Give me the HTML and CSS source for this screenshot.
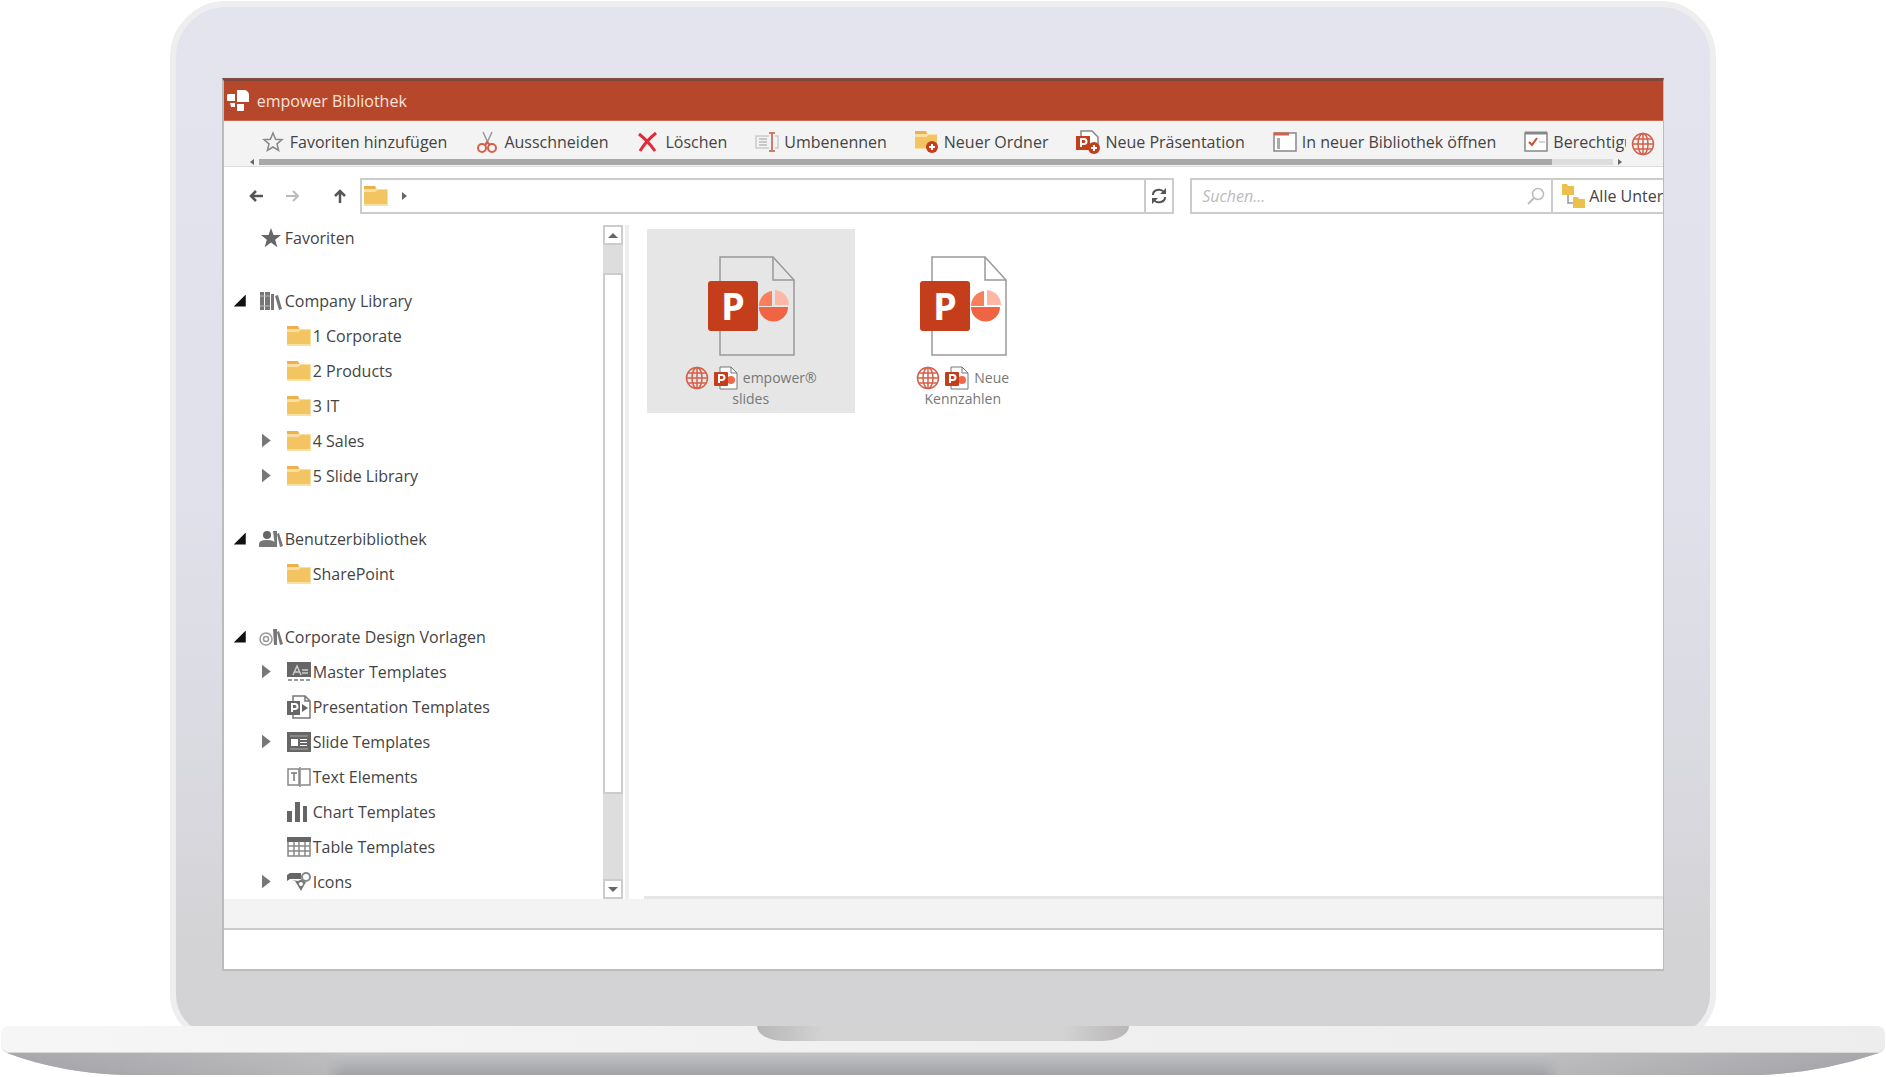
FILE: index.html
```
<!DOCTYPE html>
<html lang="de">
<head>
    <meta charset="UTF-8">
    <meta name="viewport" content="width=device-width, initial-scale=1.0">
    <title>empower Bibliothek</title>
    <link rel="stylesheet" href="styles.css">
</head>
<body>

<!-- shared icons -->
<svg class="sprite" aria-hidden="true">
    <symbol id="folder" viewBox="0 0 24 20">
        <path d="M0 0h11l2 3h11v17H0z" fill="#fbdfa0"/>
        <path d="M0 0h11l1 3H0z" fill="#eeb04c"/>
        <path d="M0 6h11l3-2h9v14H0z" fill="#f2c462"/>
    </symbol>
    <symbol id="globe" viewBox="0 0 24 24">
        <g fill="none" stroke="#d4604a" stroke-width="1.5">
            <circle cx="12" cy="12" r="10.5"/>
            <ellipse cx="12" cy="12" rx="5" ry="10.5"/>
            <path d="M12 1v22M1 12h22M3 7h18M3 17h18"/>
        </g>
    </symbol>
    <symbol id="ppt" viewBox="0 0 24 24">
        <path d="M6 1h11l6 6v16H6z" fill="#fff" stroke="#777"/>
        <path d="M17 1v6h6" fill="none" stroke="#777"/>
        <circle cx="17" cy="14" r="4" fill="#f0694a"/>
        <rect x="0" y="6" width="14" height="14" rx="1" fill="#c43e1c"/>
        <path d="M5 17V9h3a2.5 2.5 0 0 1 0 5H5" fill="none" stroke="#fff" stroke-width="2"/>
    </symbol>
    <symbol id="file" viewBox="0 0 90 100">
        <path d="M14 1h53l21 23v75H14z" fill="none" stroke="#999" stroke-width="1.5"/>
        <path d="M67 1v23h21" fill="none" stroke="#999" stroke-width="1.5"/>
        <path d="M66 50V35a15 15 0 0 0-13 15z" fill="#f97e5c"/>
        <path d="M53 51h29a14.500 14.500 0 0 1-29 0z" fill="#f06443"/>
        <path d="M69 34a15 15 0 0 1 14 15H69z" fill="#fcb8a4"/>
        <rect x="2" y="25" width="50" height="50" rx="3" fill="#c43e1c"/>
    </symbol>
    <symbol id="books" viewBox="0 0 24 20">
        <path d="M1 1h4v18H1zM6 1h5v18H6zM12 3h3v16h-3zM16 5l3-1 4 14-3 1z" fill="#777"/>
        <path d="M1 5h10M1 15h10" stroke="#bbb"/>
    </symbol>
    <symbol id="user-books" viewBox="0 0 24 20">
        <circle cx="8" cy="6" r="4" fill="#666"/>
        <path d="M0 18v-3q0-4 8-4t8 4v3zM14 2h4v16h-2zM18 5l2-1 4 13-3 1z" fill="#777"/>
    </symbol>
    <symbol id="design-books" viewBox="0 0 24 20">
        <circle cx="7" cy="12" r="6" fill="none" stroke="#999" stroke-width="1.5"/>
        <circle cx="7" cy="12" r="2.5" fill="none" stroke="#999" stroke-width="1.5"/>
        <path d="M14 2h4v16h-3zM18 5l2-1 4 13-3 1z" fill="#777"/>
    </symbol>
    <symbol id="master" viewBox="0 0 24 20">
        <path d="M0 0h24v15H0z" fill="#666"/>
        <path d="M6 13l4-9 4 9M8 10h5M15 11h6M15 8h6" fill="none" stroke="#ccc" stroke-width="1.5"/>
        <path d="M1 18h22" stroke="#999" stroke-width="2" stroke-dasharray="4 2"/>
    </symbol>
    <symbol id="presentation" viewBox="0 0 24 24">
        <path d="M6 6V1h12l5 5v17H6v-4M18 1v5h5" fill="none" stroke="#777" stroke-width="1.5"/>
        <path d="M0 6h13v14H0zM15 9l6 4-6 4z" fill="#666"/>
        <path d="M5 17V9h3a2.5 2.5 0 0 1 0 5H5" fill="none" stroke="#fff" stroke-width="2"/>
    </symbol>
    <symbol id="slide" viewBox="0 0 24 20">
        <path d="M0 0h24v20H0z" fill="#666"/>
        <path d="M3 4h18M3 17h18" stroke="#aaa"/>
        <path d="M4 7h7v7H4zM13 7h7v1h-7zM13 10h7v1h-7zM13 13h7v1h-7z" fill="#fff"/>
    </symbol>
    <symbol id="textbox" viewBox="0 0 24 20">
        <path d="M1 2h11v16H1zM14 2h9v16h-9M13 0v20" fill="none" stroke="#888" stroke-width="1.5"/>
        <path d="M4 6h6M7 6v8" stroke="#777" stroke-width="1.5"/>
    </symbol>
    <symbol id="chart" viewBox="0 0 24 20">
        <path d="M0 9h5v11H0zM8 0h5v20H8zM16 4h4v16h-4z" fill="#666"/>
    </symbol>
    <symbol id="table" viewBox="0 0 24 20">
        <path d="M1 1h22v18H1zM1 9h22M1 14h22M7 5v14M12 5v14M18 5v14" fill="#fff" stroke="#888" stroke-width="1.5"/>
        <path d="M0 0h24v5H0z" fill="#666"/>
    </symbol>
    <symbol id="shapes" viewBox="0 0 24 20">
        <path d="M0 3l3-2h11v6H3L0 9z" fill="#666"/>
        <path d="M5 8l3 1 6 10 5-9-4-3-4 2z" fill="#777"/>
        <circle cx="19" cy="5" r="4" fill="none" stroke="#888" stroke-width="2"/>
        <circle cx="14" cy="12" r="2" fill="#fff"/>
    </symbol>
</svg>

<div class="laptop">
    <div class="lid">
        <div class="screen">

            <header class="titlebar">
                <svg class="logo" viewBox="0 0 22 22" fill="#fff">
                    <path d="M10 0h7a5 5 0 0 1 5 5v7H10zM1 4h7v7H1a1 1 0 0 1-1-1V5zM3 13h5v4H4zM10 14h7v6a1 1 0 0 1-1 1h-6z"/>
                </svg>
                <h1>empower Bibliothek</h1>
            </header>

            <div class="toolbar">
                <div class="tool-scroller">
                    <div class="tools">
                        <button><svg viewBox="0 0 24 24"><path d="M12 3l2.600 6.200 6.400.5-5 4.200 1.600 6.600L12 17l-5.600 3.500L8 13.900 3 9.700l6.400-.5z" fill="none" stroke="#888" stroke-width="1.500"/></svg>Favoriten hinzufügen</button>
                        <button><svg viewBox="0 0 24 24"><path d="M8 2l6 13M17 2l-6 13" stroke="#999" stroke-width="1.500"/><g fill="none" stroke="#d4604a" stroke-width="2"><ellipse cx="7" cy="18" rx="4" ry="4"/><ellipse cx="17" cy="18" rx="4" ry="4"/><path d="M10 15l2-3 3 3"/></g></svg>Ausschneiden</button>
                        <button><svg viewBox="0 0 24 24"><path d="M3 4q9 7 16 17M20 3Q10 11 4 21" fill="none" stroke="#e02b3c" stroke-width="3"/></svg>Löschen</button>
                        <button><svg viewBox="0 0 24 24"><path d="M14 6H1v12h13M20 6h3v12h-3" fill="none" stroke="#ccc" stroke-width="1.500"/><path d="M4 9h8M4 12h8M4 15h8" stroke="#bbb" stroke-width="1.500"/><path d="M14 3h6M14 21h6M17 3v18" stroke="#cf7d68" stroke-width="2"/></svg>Umbenennen</button>
                        <button><svg viewBox="0 0 24 24"><path d="M0 1h11l2 3h9v15H0z" fill="#fbdfa0"/><path d="M0 1h11l1 3H0z" fill="#eeb04c"/><path d="M0 7h11l3-2h8v13H0z" fill="#f2c462"/><circle cx="17" cy="17" r="6" fill="#c43e1c"/><path d="M17 14v6M14 17h6" stroke="#fff" stroke-width="2"/></svg>Neuer Ordner</button>
                        <button><svg viewBox="0 0 24 24"><path d="M5 6V1h11l6 6v10" fill="#fff" stroke="#888" stroke-width="1.500"/><rect y="6" width="14" height="14" fill="#c43e1c"/><path d="M5 17V9h3a2.500 2.500 0 0 1 0 5H5" fill="none" stroke="#fff" stroke-width="2"/><circle cx="18" cy="18" r="6" fill="#c43e1c"/><path d="M18 15v6M15 18h6" stroke="#fff" stroke-width="2"/></svg>Neue Präsentation</button>
                        <button><svg viewBox="0 0 24 24"><path d="M1 3h22v18H1z" fill="#fff" stroke="#888" stroke-width="1.500"/><path d="M1 4h15" stroke="#d4604a" stroke-width="3"/><path d="M4 8h3v11H4z" fill="#aaa"/></svg>In neuer Bibliothek öffnen</button>
                        <button><svg viewBox="0 0 24 24"><path d="M1 3h22v18H1z" fill="#fff" stroke="#888" stroke-width="1.500"/><path d="M1 3h22" stroke="#888" stroke-width="3"/><path d="M5 12l3 3 5-7" fill="none" stroke="#d04a30" stroke-width="2"/><path d="M15 12h6" stroke="#aaa"/></svg>Berechtigungen</button>
                    </div>
                    <div class="hscroll">
                        <svg viewBox="0 0 4 6"><path d="M4 0v6L0 3z" fill="#666"/></svg>
                        <div class="htrack"><div class="hthumb"></div></div>
                        <svg viewBox="0 0 4 6"><path d="M0 0v6l4-3z" fill="#666"/></svg>
                    </div>
                </div>
                <button class="language" aria-label="Sprache"><svg><use href="#globe"/></svg></button>
            </div>

            <div class="navbar">
                <div class="arrows">
                    <button aria-label="Zurück"><svg viewBox="0 0 14 14"><path d="M14 7H2M7 2L2 7l5 5" fill="none" stroke="#555" stroke-width="2.500"/></svg></button>
                    <button aria-label="Vorwärts"><svg viewBox="0 0 14 14"><path d="M0 7h12M7 2l5 5-5 5" fill="none" stroke="#bbb" stroke-width="2"/></svg></button>
                    <button aria-label="Nach oben"><svg viewBox="0 0 14 14"><path d="M7 14V2M2 7l5-5 5 5" fill="none" stroke="#555" stroke-width="2.500"/></svg></button>
                </div>
                <div class="address">
                    <button class="crumb" aria-label="Stammordner">
                        <svg class="icon"><use href="#folder"/></svg>
                        <svg class="caret" viewBox="0 0 5 8"><path d="M0 0v8l5-4z" fill="#666"/></svg>
                    </button>
                    <button class="refresh" aria-label="Aktualisieren">
                        <svg viewBox="0 0 16 16"><path d="M2 7a6 5 0 0 1 11-3M14 9a6 5 0 0 1-11 3" fill="none" stroke="#555" stroke-width="2"/><path d="M15 0v6H9zM1 16v-6h6z" fill="#555"/></svg>
                    </button>
                </div>
                <div class="search">
                    <input type="text" aria-label="Suchen" placeholder="Suchen...">
                    <svg viewBox="0 0 18 18"><circle cx="11" cy="7" r="5.500" fill="none" stroke="#bbb" stroke-width="1.500"/><path d="M7 11l-6 6" stroke="#bbb" stroke-width="2"/></svg>
                </div>
                <button class="filter">
                    <svg viewBox="0 0 24 24"><path d="M6 10v9h5" fill="none" stroke="#999" stroke-width="1.500"/><path d="M0 0h5l1 2h6v9H0zM11 13h5l1 2h6v9H11z" fill="#ecc04e"/></svg>
                    Alle Unterordner
                </button>
            </div>

            <div class="body">
                <nav class="tree">
                    <ul>
                        <li><a href="#"><span class="toggle"></span><svg class="icon" viewBox="0 0 24 24"><path d="M12 0l3 8.500h9l-7 5.500 2.600 9L12 17.500 4.400 23 7 14 0 8.500h9z" fill="#666"/></svg>Favoriten</a></li>
                    </ul>
                    <ul>
                        <li><a href="#"><span class="toggle open"></span><svg class="icon"><use href="#books"/></svg>Company Library</a>
                            <ul>
                                <li><a href="#"><span class="toggle"></span><svg class="icon"><use href="#folder"/></svg>1 Corporate</a></li>
                                <li><a href="#"><span class="toggle"></span><svg class="icon"><use href="#folder"/></svg>2 Products</a></li>
                                <li><a href="#"><span class="toggle"></span><svg class="icon"><use href="#folder"/></svg>3 IT</a></li>
                                <li><a href="#"><span class="toggle closed"></span><svg class="icon"><use href="#folder"/></svg>4 Sales</a></li>
                                <li><a href="#"><span class="toggle closed"></span><svg class="icon"><use href="#folder"/></svg>5 Slide Library</a></li>
                            </ul>
                        </li>
                    </ul>
                    <ul>
                        <li><a href="#"><span class="toggle open"></span><svg class="icon"><use href="#user-books"/></svg>Benutzerbibliothek</a>
                            <ul>
                                <li><a href="#"><span class="toggle"></span><svg class="icon"><use href="#folder"/></svg>SharePoint</a></li>
                            </ul>
                        </li>
                    </ul>
                    <ul>
                        <li><a href="#"><span class="toggle open"></span><svg class="icon"><use href="#design-books"/></svg>Corporate Design Vorlagen</a>
                            <ul>
                                <li><a href="#"><span class="toggle closed"></span><svg class="icon"><use href="#master"/></svg>Master Templates</a></li>
                                <li><a href="#"><span class="toggle"></span><svg class="icon tall"><use href="#presentation"/></svg>Presentation Templates</a></li>
                                <li><a href="#"><span class="toggle closed"></span><svg class="icon"><use href="#slide"/></svg>Slide Templates</a></li>
                                <li><a href="#"><span class="toggle"></span><svg class="icon"><use href="#textbox"/></svg>Text Elements</a></li>
                                <li><a href="#"><span class="toggle"></span><svg class="icon"><use href="#chart"/></svg>Chart Templates</a></li>
                                <li><a href="#"><span class="toggle"></span><svg class="icon"><use href="#table"/></svg>Table Templates</a></li>
                                <li><a href="#"><span class="toggle closed"></span><svg class="icon"><use href="#shapes"/></svg>Icons</a></li>
                            </ul>
                        </li>
                    </ul>
                </nav>

                <div class="vscroll">
                    <button aria-label="Nach oben scrollen"><svg viewBox="0 0 10 5"><path d="M0 5h10L5 0z" fill="#666"/></svg></button>
                    <div class="vtrack"><div class="vthumb"></div></div>
                    <button aria-label="Nach unten scrollen"><svg viewBox="0 0 10 5"><path d="M0 0h10L5 5z" fill="#666"/></svg></button>
                </div>
                <div class="splitter"></div>

                <main class="files">
                    <a href="#" class="tile selected">
                        <svg class="thumb" viewBox="0 0 90 100"><use href="#file"/><text x="27" y="64" text-anchor="middle">P</text></svg>
                        <span class="name"><svg><use href="#globe"/></svg><svg><use href="#ppt"/></svg>empower®<br>slides</span>
                    </a>
                    <a href="#" class="tile">
                        <svg class="thumb" viewBox="0 0 90 100"><use href="#file"/><text x="27" y="64" text-anchor="middle">P</text></svg>
                        <span class="name"><svg><use href="#globe"/></svg><svg><use href="#ppt"/></svg>Neue<br>Kennzahlen</span>
                    </a>
                </main>
            </div>

            <footer class="statusbar"></footer>
        </div>
    </div>

    <div class="base">
        <div class="notch"></div>
    </div>
    <svg class="underside" viewBox="0 0 1886 22" preserveAspectRatio="none">
        <defs>
            <linearGradient id="shade" x1="0" y1="0" x2="0" y2="1">
                <stop offset="0" stop-color="#c2c4c8"/>
                <stop offset="1" stop-color="#a2a3a6"/>
            </linearGradient>
            <linearGradient id="edge">
                <stop offset="0" stop-color="#a2a1a7"/>
                <stop offset="0.170" stop-color="#bcbcbd"/>
                <stop offset="0.180" stop-color="#bcbcbd" stop-opacity="0"/>
                <stop offset="0.820" stop-color="#bcbcbd" stop-opacity="0"/>
                <stop offset="0.830" stop-color="#bcbcbd"/>
                <stop offset="1" stop-color="#a2a1a7"/>
            </linearGradient>
        </defs>
        <path d="M7 0h1872Q1820 20 1760 22H126Q60 20 7 0z" fill="url(#shade)"/>
        <path d="M7 0h1872Q1820 20 1760 22H126Q60 20 7 0z" fill="url(#edge)" opacity="0.800"/>
    </svg>
</div>

</body>
</html>
```

FILE: styles.css
```
* {
    box-sizing: border-box;
}
body {
    margin: 0;
    background: #fff;
    color: #444;
    font-family: "Open Sans", "Noto Sans", sans-serif;
    font-size: 16px;
}
button {
    font: inherit;
    color: inherit;
    background: none;
    border: none;
    padding: 0;
    cursor: pointer;
}
a {
    color: inherit;
    text-decoration: none;
}
ul {
    list-style: none;
    margin: 0;
    padding: 0;
}
svg {
    flex: none;
}
.sprite {
    position: absolute;
    width: 0;
    height: 0;
}

/* laptop */
.laptop {
    padding-top: 1px;
    overflow: hidden;
}
.lid {
    width: 82%;
    margin: 0 auto -16px;
    padding: 71px 46px 65px;
    border: 6px solid #eee;
    border-radius: 56px 56px 48px 48px;
    background: linear-gradient(#e4e4ee, #e0e0ea 50%, #d8d8de 78%, #d3d3d5 92%);
}
.screen {
    background: #fff;
    border: 2px solid #bbb;
    border-top: 3px solid #7d4a40;
    border-right-width: 1px;
    overflow: hidden;
}
.base {
    position: relative;
    height: 27px;
    margin: 0 1px;
    border-radius: 8px;
    border-bottom: 1px solid #d8d8d8;
    background: linear-gradient(to right, #f6f6f6, #f0f0f0 50%, #ededed);
}
.notch {
    width: 372px;
    height: 15px;
    margin: 0 auto;
    border-radius: 0 0 26px 26px / 0 0 15px 15px;
    background: linear-gradient(to right, #b8b6b7, #d3d3d3 18%, #d3d3d3 82%, #b8b6b7);
}
.underside {
    display: block;
    width: 100%;
    height: 22px;
}

/* title bar and toolbar */
.titlebar {
    display: flex;
    align-items: center;
    gap: 8px;
    height: 40px;
    padding-left: 3px;
    background: #b7472a;
    color: #fbe3dc;
    border-bottom: 1px solid #c96a50;
}
.titlebar h1 {
    margin: 0;
    font-size: 16px;
    font-weight: 400;
}
.logo {
    width: 22px;
    height: 22px;
}
.toolbar {
    display: flex;
    height: 46px;
    padding: 0 8px 0 25px;
    background: #f3f3f3;
    border-bottom: 1px solid #ddd;
}
.tool-scroller {
    flex: 1;
    min-width: 0;
}
.tools {
    display: flex;
    gap: 28px;
    height: 38px;
    padding: 4px 0 0 12px;
    overflow: hidden;
}
.tools button {
    display: flex;
    align-items: center;
    gap: 5px;
    white-space: nowrap;
}
.tools svg {
    width: 24px;
    height: 24px;
}
.hscroll {
    display: flex;
    gap: 5px;
    padding: 0 4px 0 1px;
}
.hscroll svg {
    width: 4px;
    height: 6px;
}
.htrack {
    flex: 1;
    height: 6px;
    background: #ddd;
}
.hthumb {
    width: calc(100% - 61px);
    height: 6px;
    background: #a9a9a9;
}
.language {
    padding-left: 5px;
}
.language svg {
    display: block;
    width: 24px;
    height: 24px;
}

/* address row */
.navbar {
    display: flex;
    padding: 11px 0 4px 25px;
}
.arrows {
    display: flex;
    align-items: center;
    gap: 23px;
    width: 111px;
}
.arrows button:last-child {
    margin-left: 10px;
}
.arrows svg {
    display: block;
    width: 14px;
    height: 14px;
}
.address, .search, .filter {
    display: flex;
    align-items: center;
    height: 36px;
    border: 2px solid #ccc;
}
.address {
    flex: 1;
    justify-content: space-between;
    margin-right: 16px;
}
.crumb {
    display: flex;
    align-items: center;
    gap: 14px;
    padding-left: 2px;
}
.caret {
    width: 5px;
    height: 8px;
}
.refresh {
    width: 28px;
    height: 32px;
    border-left: 2px solid #ccc;
}
.refresh svg {
    display: block;
    width: 16px;
    height: 16px;
    margin: 0 auto;
}
.search {
    width: 363px;
    padding: 0 6px 0 10px;
}
.search input {
    flex: 1;
    min-width: 0;
    padding: 0;
    border: none;
    outline: none;
    font: inherit;
}
.search input::placeholder {
    color: #bbb;
    font-style: italic;
}
.search svg {
    width: 18px;
    height: 18px;
}
.filter {
    gap: 3px;
    width: 110px;
    padding-left: 9px;
    border-left: none;
    border-right: none;
    overflow: hidden;
    white-space: nowrap;
}
.filter svg {
    width: 24px;
    height: 24px;
}

/* library tree */
.body {
    display: flex;
}
.tree {
    flex: none;
    width: 379px;
    padding-top: 2px;
}
.tree > ul + ul {
    margin-top: 28px;
}
.tree a {
    display: flex;
    align-items: center;
    gap: 2px;
    height: 35px;
    padding-left: 10px;
}
.tree ul ul a {
    padding-left: 38px;
}
.icon {
    width: 24px;
    height: 20px;
}
.icon.tall {
    height: 24px;
}
.toggle {
    width: 23px;
}
.toggle::before {
    content: "";
    display: block;
    width: 12px;
    height: 12px;
}
.open::before {
    background: #111;
    clip-path: polygon(100% 0, 100% 100%, 0 100%);
}
.closed::before {
    width: 9px;
    height: 14px;
    background: #777;
    clip-path: polygon(0 0, 100% 50%, 0 100%);
}
.vscroll {
    display: flex;
    flex-direction: column;
    flex: none;
    width: 20px;
    margin-top: 7px;
}
.vscroll button {
    height: 20px;
    border: 2px solid #ccc;
    background: #fff;
}
.vscroll button svg {
    display: block;
    width: 10px;
    height: 5px;
    margin: 0 auto;
}
.vtrack {
    flex: 1;
    padding-top: 28px;
    background: #ddd;
}
.vthumb {
    height: 86%;
    border: 2px solid #ccc;
    background: #fff;
}
.splitter {
    flex: none;
    width: 4px;
    margin: 7px 15px 0 2px;
    background: #eee;
}

/* file tiles */
.files {
    flex: 1;
    display: flex;
    align-items: flex-start;
    gap: 4px;
    padding: 11px 0 0 3px;
    border-bottom: 3px solid #e6e6e6;
}
.tile {
    width: 208px;
    height: 184px;
    padding-top: 27px;
    text-align: center;
}
.selected {
    background: #e6e6e6;
}
.thumb {
    display: block;
    width: 90px;
    height: 100px;
    margin: 0 auto 11px;
}
.thumb text {
    font-size: 38px;
    font-weight: 700;
    fill: #fff;
}
.name {
    display: block;
    color: #777;
    font-size: 14px;
    line-height: 21px;
}
.name svg {
    width: 24px;
    height: 24px;
    margin: -4px 5px -2px 0;
    vertical-align: middle;
}

.statusbar {
    height: 70px;
    border-top: 29px solid #f3f3f3;
    background: linear-gradient(#ccc 2px, #fff 2px);
}
```
